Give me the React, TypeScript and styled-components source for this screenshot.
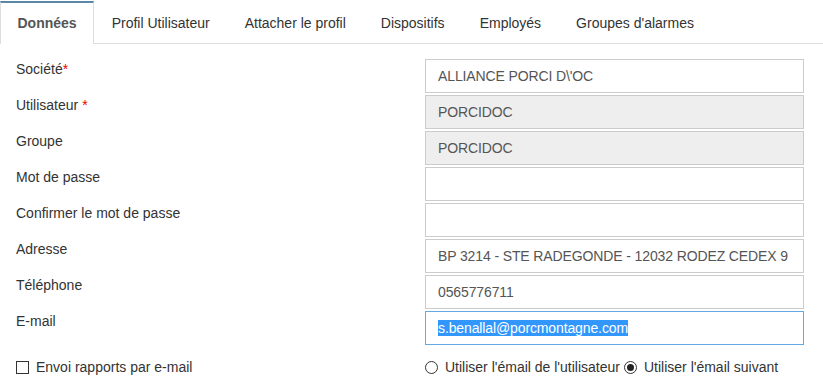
import React from "react";
import styled, { createGlobalStyle } from "styled-components";

const Global = createGlobalStyle`
  html, body { margin: 0; padding: 0; background: #fff; }
  body { font-family: "Liberation Sans", Arial, sans-serif; font-size: 14px; color: #333; }
  * { box-sizing: border-box; }
  ::selection { background: #3297fd; color: #fff; }
`;

const Page = styled.div`
  width: 823px;
  padding-top: 1px;
`;

const TabBar = styled.ul`
  display: flex;
  margin: 0;
  padding: 0;
  list-style: none;
  border-bottom: 1px solid #ddd;
  height: 43px;
`;

const Tab = styled.li<{ $active?: boolean }>`
  padding: 0 16.5px;
  line-height: 41px;
  font-size: 14px;
  color: ${p => (p.$active ? "#555" : "#333")};
  font-weight: ${p => (p.$active ? "bold" : "normal")};
  background: #fff;
  border-top: 2px solid ${p => (p.$active ? "#5a89a8" : "transparent")};
  border-left: 1px solid ${p => (p.$active ? "#ddd" : "transparent")};
  border-right: 1px solid ${p => (p.$active ? "#ddd" : "transparent")};
  margin-bottom: ${p => (p.$active ? "-1px" : "0")};
  height: ${p => (p.$active ? "43px" : "42px")};
  white-space: nowrap;
`;

const Form = styled.div`
  display: grid;
  grid-template-columns: 409px 379px;
  row-gap: 2px;
  padding: 15px 0 0 16px;
`;

const Label = styled.div`
  line-height: 18px;
  padding-top: 1px;
  height: 34px;
`;

const Star = styled.span`
  color: #e00;
`;

const Input = styled.input<{ $disabled?: boolean; $focus?: boolean }>`
  display: block;
  width: 379px;
  height: 34px;
  margin: 0;
  padding: 0 12px;
  font-family: "Liberation Sans", Arial, sans-serif;
  font-size: 14px;
  letter-spacing: -0.12px;
  color: #555;
  background: ${p => (p.$disabled ? "#eee" : "#fff")};
  border: 1px solid ${p => (p.$focus ? "#66a9e2" : "#ccc")};
  border-radius: 0;
  outline: none;
`;

const Options = styled.div`
  display: grid;
  grid-template-columns: 409px auto;
  padding: 13px 0 0 16px;
  line-height: 18px;
`;

const Check = styled.label`
  display: flex;
  align-items: center;
  gap: 7px;
`;

const Box = styled.span`
  width: 13px;
  height: 13px;
  border: 1px solid #333;
  display: inline-block;
`;

const Radios = styled.div`
  display: flex;
  align-items: center;
  gap: 4px;
`;

const RadioItem = styled.label`
  display: flex;
  align-items: center;
  gap: 7px;
`;

const Radio = styled.span<{ $checked?: boolean }>`
  width: 13px;
  height: 13px;
  border: 1px solid #333;
  border-radius: 50%;
  display: inline-flex;
  align-items: center;
  justify-content: center;
  &::after {
    content: "";
    display: ${p => (p.$checked ? "block" : "none")};
    width: 7px;
    height: 7px;
    border-radius: 50%;
    background: #222;
  }
`;

const rows: { label: string; star?: string; value: string; disabled?: boolean; focus?: boolean }[] = [
  { label: "Société", star: "*", value: "ALLIANCE PORCI D\\'OC" },
  { label: "Utilisateur ", star: "*", value: "PORCIDOC", disabled: true },
  { label: "Groupe", value: "PORCIDOC", disabled: true },
  { label: "Mot de passe", value: "" },
  { label: "Confirmer le mot de passe", value: "" },
  { label: "Adresse", value: "BP 3214 - STE RADEGONDE - 12032 RODEZ CEDEX 9" },
  { label: "Téléphone", value: "0565776711" },
  { label: "E-mail", value: "s.benallal@porcmontagne.com", focus: true },
];

export default function App() {
  const emailRef = React.useRef<HTMLInputElement>(null);
  React.useEffect(() => {
    const el = emailRef.current;
    if (el) {
      el.focus();
      el.setSelectionRange(0, el.value.length);
    }
  }, []);
  return (
    <Page>
      <Global />
      <TabBar>
        <Tab $active>Données</Tab>
        <Tab>Profil Utilisateur</Tab>
        <Tab>Attacher le profil</Tab>
        <Tab>Dispositifs</Tab>
        <Tab>Employés</Tab>
        <Tab>Groupes d'alarmes</Tab>
      </TabBar>
      <Form>
        {rows.map(r => (
          <React.Fragment key={r.label}>
            <Label>
              {r.label}
              {r.star && <Star>{r.star}</Star>}
            </Label>
            <Input
              ref={r.focus ? emailRef : undefined}
              defaultValue={r.value}
              readOnly={r.disabled}
              $disabled={r.disabled}
              $focus={r.focus}
            />
          </React.Fragment>
        ))}
      </Form>
      <Options>
        <Check>
          <Box />
          Envoi rapports par e-mail
        </Check>
        <Radios>
          <RadioItem>
            <Radio />
            Utiliser l'émail de l'utilisateur
          </RadioItem>
          <RadioItem>
            <Radio $checked />
            Utiliser l'émail suivant
          </RadioItem>
        </Radios>
      </Options>
    </Page>
  );
}
